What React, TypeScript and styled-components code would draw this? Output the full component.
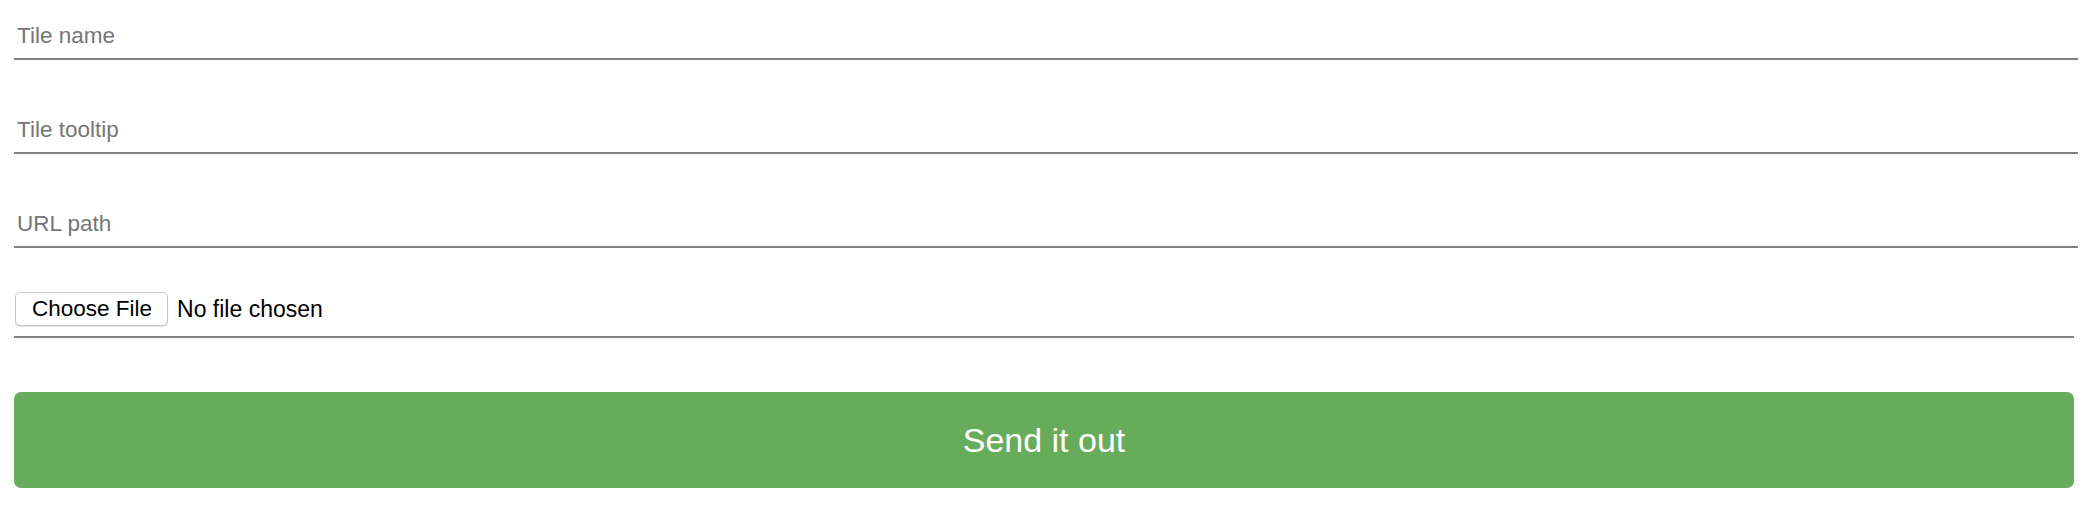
import React from "react";
import styled, { createGlobalStyle } from "styled-components";

const GlobalStyle = createGlobalStyle`
  html, body {
    margin: 0;
    padding: 0;
    background: #ffffff;
    font-family: "Liberation Sans", Arial, Helvetica, sans-serif;
  }
  * { box-sizing: border-box; }
`;

const Form = styled.form`
  display: flex;
  flex-direction: column;
  width: 2060px;
  margin: 0 0 0 14px;
  padding-top: 14px;
`;

const TextInput = styled.input`
  display: block;
  width: calc(100% + 4px);
  height: 46px;
  margin: 0 0 48px 0;
  padding: 0 3px;
  border: none;
  border-bottom: 2px solid #808080;
  border-radius: 0;
  background: transparent;
  font-family: inherit;
  font-size: 22.5px;
  color: #222;
  outline: none;

  &::placeholder {
    color: #767676;
    opacity: 1;
  }
`;

const FileRow = styled.label`
  display: flex;
  align-items: center;
  gap: 9px;
  height: 50px;
  margin-top: -8px;
  padding: 4px 0 10px 1px;
  border-bottom: 2px solid #808080;
  cursor: pointer;
`;

const HiddenFile = styled.input`
  display: none;
`;

const ChooseButton = styled.span`
  display: inline-flex;
  align-items: center;
  height: 34px;
  padding: 0 15px 0 16px;
  background: #ffffff;
  border: 1px solid #c8c8c8;
  border-radius: 5px;
  box-shadow: 0 1px 1px rgba(0, 0, 0, 0.12);
  font-size: 22.5px;
  color: #000;
`;

const FileStatus = styled.span`
  font-size: 23px;
  color: #000;
`;

const SubmitButton = styled.button`
  display: block;
  width: 100%;
  height: 96px;
  margin-top: 54px;
  border: none;
  border-radius: 7px;
  background: #67ac5b;
  color: #ffffff;
  font-family: inherit;
  font-size: 34px;
  cursor: pointer;
`;

export default function App() {
  return (
    <>
      <GlobalStyle />
      <Form onSubmit={(e) => e.preventDefault()}>
        <TextInput type="text" placeholder="Tile name" />
        <TextInput type="text" placeholder="Tile tooltip" />
        <TextInput type="text" placeholder="URL path" />
        <FileRow>
          <HiddenFile type="file" />
          <ChooseButton>Choose File</ChooseButton>
          <FileStatus>No file chosen</FileStatus>
        </FileRow>
        <SubmitButton type="submit">Send it out</SubmitButton>
      </Form>
    </>
  );
}
